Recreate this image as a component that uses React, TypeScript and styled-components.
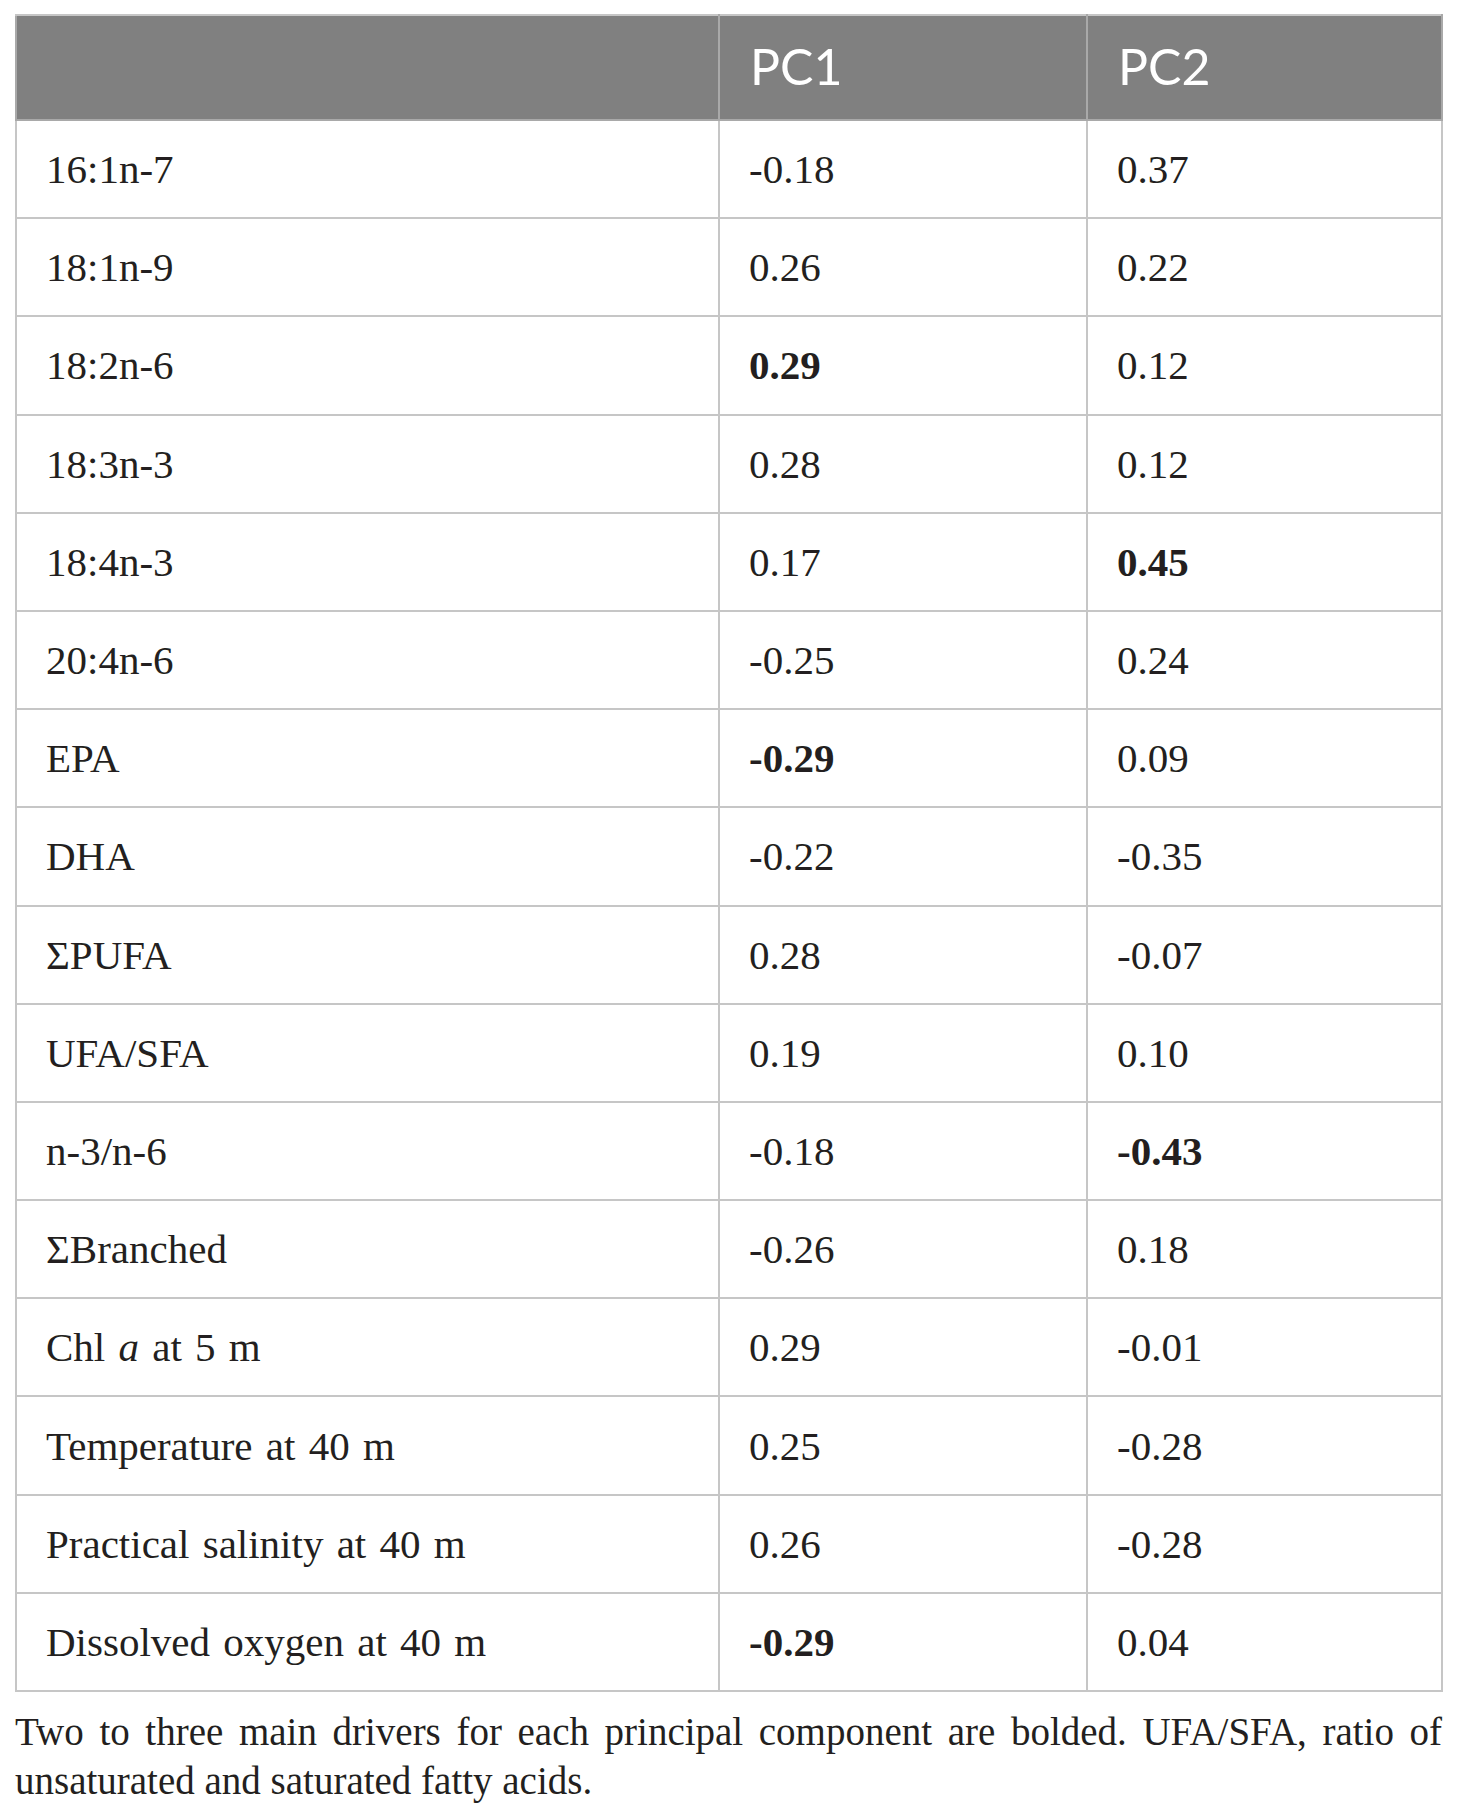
import React from "react";
import styled, { createGlobalStyle } from "styled-components";

const GlobalStyle = createGlobalStyle`
  html, body {
    margin: 0;
    padding: 0;
    background: #ffffff;
  }
  body {
    font-family: "Liberation Serif", "Times New Roman", serif;
    color: #231f20;
  }
`;

const Page = styled.div`
  width: 1426px;
  padding: 14px 0 0 15px;
`;

const Table = styled.table`
  width: 1426px;
  border-collapse: collapse;
  table-layout: fixed;
  border: 2px solid #c6c6c6;
`;

const HeadCell = styled.th`
  background: #808080;
  color: #ffffff;
  font-family: Lato, "Open Sans", sans-serif;
  font-weight: 400;
  font-size: 50px;
  text-align: left;
  height: 105px;
  padding: 0 30px 4px 30px;
  border: 2px solid #a9a9a9;
  border-top-color: #c6c6c6;
  box-sizing: border-box;
`;

const Cell = styled.td<{ $bold?: boolean }>`
  font-family: "Liberation Serif", "Times New Roman", serif;
  font-size: 41px;
  word-spacing: 3px;
  font-weight: ${(p) => (p.$bold ? 700 : 400)};
  color: #231f20;
  height: 96.2px;
  padding: 0 30px 0 29px;
  border: 2px solid #c6c6c6;
  vertical-align: middle;
  white-space: nowrap;
`;

const Caption = styled.p`
  margin: 15px 0 0 0;
  width: 1427px;
  font-family: "Liberation Serif", "Times New Roman", serif;
  font-size: 39px;
  line-height: 49px;
  text-align: justify;
  color: #231f20;
`;

type Row = {
  label: React.ReactNode;
  pc1: string;
  pc2: string;
  b1?: boolean;
  b2?: boolean;
};

const rows: Row[] = [
  { label: "16:1n-7", pc1: "-0.18", pc2: "0.37" },
  { label: "18:1n-9", pc1: "0.26", pc2: "0.22" },
  { label: "18:2n-6", pc1: "0.29", pc2: "0.12", b1: true },
  { label: "18:3n-3", pc1: "0.28", pc2: "0.12" },
  { label: "18:4n-3", pc1: "0.17", pc2: "0.45", b2: true },
  { label: "20:4n-6", pc1: "-0.25", pc2: "0.24" },
  { label: "EPA", pc1: "-0.29", pc2: "0.09", b1: true },
  { label: "DHA", pc1: "-0.22", pc2: "-0.35" },
  { label: "ΣPUFA", pc1: "0.28", pc2: "-0.07" },
  { label: "UFA/SFA", pc1: "0.19", pc2: "0.10" },
  { label: "n-3/n-6", pc1: "-0.18", pc2: "-0.43", b2: true },
  { label: "ΣBranched", pc1: "-0.26", pc2: "0.18" },
  {
    label: (
      <>
        Chl <i>a</i> at 5 m
      </>
    ),
    pc1: "0.29",
    pc2: "-0.01",
  },
  { label: "Temperature at 40 m", pc1: "0.25", pc2: "-0.28" },
  { label: "Practical salinity at 40 m", pc1: "0.26", pc2: "-0.28" },
  { label: "Dissolved oxygen at 40 m", pc1: "-0.29", pc2: "0.04", b1: true },
];

export default function App() {
  return (
    <>
      <GlobalStyle />
      <Page>
        <Table>
          <colgroup>
            <col style={{ width: 703 }} />
            <col style={{ width: 368 }} />
            <col style={{ width: 355 }} />
          </colgroup>
          <thead>
            <tr>
              <HeadCell />
              <HeadCell>PC1</HeadCell>
              <HeadCell>PC2</HeadCell>
            </tr>
          </thead>
          <tbody>
            {rows.map((r, i) => (
              <tr key={i}>
                <Cell>{r.label}</Cell>
                <Cell $bold={r.b1}>{r.pc1}</Cell>
                <Cell $bold={r.b2}>{r.pc2}</Cell>
              </tr>
            ))}
          </tbody>
        </Table>
        <Caption>
          Two to three main drivers for each principal component are bolded.
          UFA/SFA, ratio of unsaturated and saturated fatty acids.
        </Caption>
      </Page>
    </>
  );
}
